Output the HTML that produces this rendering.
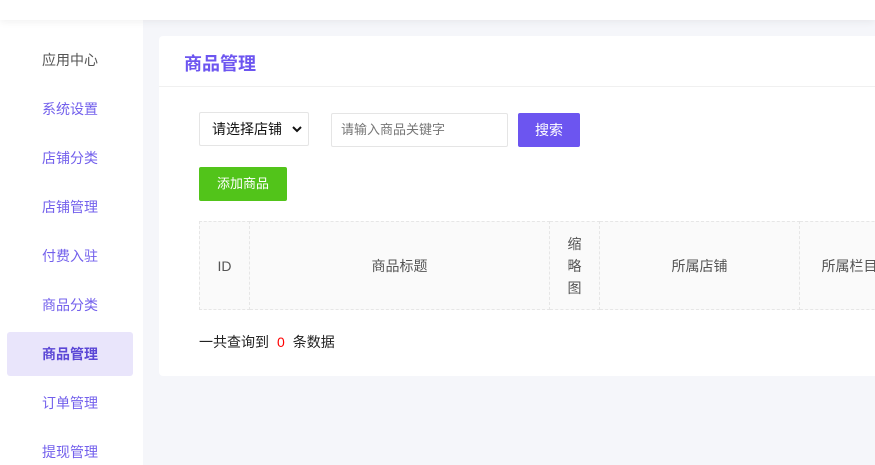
<!DOCTYPE html>
<html><head><meta charset="utf-8"><style>
*{margin:0;padding:0;box-sizing:border-box}
html,body{width:875px;height:465px;overflow:hidden}
body{background:#f5f6fa;font-family:"Liberation Sans","Noto Sans CJK SC",sans-serif;font-size:14px;position:relative}
.top{position:absolute;left:0;top:0;width:875px;height:20px;background:#fff;box-shadow:0 2px 8px rgba(0,0,0,.06);z-index:2}
.side{position:absolute;left:0;top:20px;width:143px;height:445px;background:#fff}
.it{position:absolute;left:7px;width:126px;height:44px;line-height:44px;padding-left:35px;color:#7360ec;font-size:14px;border-radius:3px}
.it.act{background:#e9e5fb;color:#5b47d6;font-weight:bold}
.card{position:absolute;left:159px;top:36px;width:730px;height:340px;background:#fff;border-radius:4px;overflow:hidden}
.title{position:absolute;left:25px;top:14px;font-size:18px;font-weight:bold;color:#6c55f0}
.hr{position:absolute;left:0;top:50px;width:100%;height:1px;background:#f0f0f0}
.sel{position:absolute;left:40px;top:76px;width:110px;height:34px;border:1px solid #e5e5e5;border-radius:2px;line-height:32px;padding-left:12px;color:#111}
.sel svg{position:absolute;right:6px;top:13px}
.inp{position:absolute;left:172px;top:77px;width:177px;height:34px;border:1px solid #e5e5e5;border-radius:2px;line-height:32px;padding-left:9px;color:#777;font-size:13px}
.btn{position:absolute;left:359px;top:77px;width:62px;height:34px;background:#6c55f0;color:#fff;border-radius:2px;text-align:center;line-height:34px}
.add{position:absolute;left:40px;top:131px;width:88px;height:34px;background:#52c41a;color:#fff;border-radius:2px;text-align:center;line-height:34px;font-size:13px}
table{position:absolute;left:40px;top:185px;border-collapse:collapse;background:#fafafa;table-layout:fixed;width:700px}
td{border:1px dashed #e6e6e6;height:88px;text-align:center;color:#555;font-size:14px;padding:0}
.cnt{position:absolute;left:40px;top:296px;color:#222;font-size:14px}
.cnt b{color:#f00;font-weight:normal;margin:0 8px}
</style></head><body>
<div class="top"></div>
<div class="side">
<div class="it" style="top:18px;color:#555">应用中心</div>
<div class="it" style="top:67px">系统设置</div>
<div class="it" style="top:116px">店铺分类</div>
<div class="it" style="top:165px">店铺管理</div>
<div class="it" style="top:214px">付费入驻</div>
<div class="it" style="top:263px">商品分类</div>
<div class="it act" style="top:312px">商品管理</div>
<div class="it" style="top:361px">订单管理</div>
<div class="it" style="top:410px">提现管理</div>
</div>
<div class="card">
<div class="title">商品管理</div>
<div class="hr"></div>
<div class="sel">请选择店铺<svg width="10" height="7" viewBox="0 0 10 7"><path d="M1 1L5 5L9 1" fill="none" stroke="#111" stroke-width="2"/></svg></div>
<div class="inp">请输入商品关键字</div>
<div class="btn">搜索</div>
<div class="add">添加商品</div>
<table><colgroup><col style="width:50px"><col style="width:300px"><col style="width:50px"><col style="width:200px"><col style="width:100px"></colgroup><tr>
<td>ID</td>
<td>商品标题</td>
<td style="line-height:22px">缩<br>略<br>图</td>
<td>所属店铺</td>
<td>所属栏目</td>
</tr></table>
<div class="cnt">一共查询到<b>0</b>条数据</div>
</div>
</body></html>
